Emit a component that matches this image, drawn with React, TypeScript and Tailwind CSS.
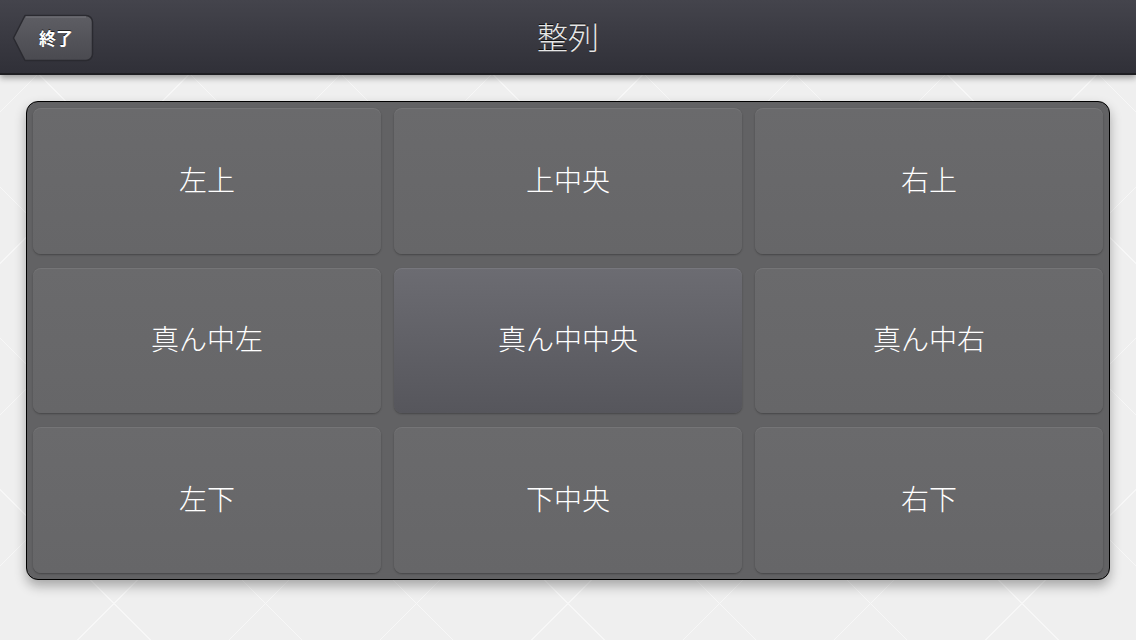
const cells = [
  '左上', '上中央', '右上',
  '真ん中左', '真ん中中央', '真ん中右',
  '左下', '下中央', '右下',
];

function BackButton() {
  return (
    <button className="relative ml-[12px] mt-[14px] h-[48px] w-[82px]">
      <svg className="absolute inset-0" width="82" height="48" viewBox="0 0 82 48">
        <defs>
          <linearGradient id="bb" x1="0" y1="0" x2="0" y2="1">
            <stop offset="0" stopColor="#5e5e64" />
            <stop offset="1" stopColor="#4a4a50" />
          </linearGradient>
        </defs>
        <path
          d="M13 1.5 H74 a6.5 6.5 0 0 1 6.5 6.5 V40 a6.5 6.5 0 0 1 -6.5 6.5 H13 L1.5 24 Z"
          fill="url(#bb)"
          stroke="#2a2a30"
          strokeWidth="1.5"
          strokeLinejoin="round"
        />
        <path d="M14 3 H74" stroke="#77777d" strokeWidth="1" />
      </svg>
      <span className="relative flex h-full items-center justify-center pl-[6px] text-[17px] font-bold text-white [text-shadow:0_-1px_0_#222]">
        終了
      </span>
    </button>
  );
}

export default function App() {
  return (
    <div className="flex h-[640px] w-[1136px] flex-col overflow-hidden bg-[#efefef] bg-[repeating-linear-gradient(45deg,transparent_0,transparent_106px,#f7f7f7_106px,#f7f7f7_107px),repeating-linear-gradient(-45deg,transparent_0,transparent_106px,#f7f7f7_106px,#f7f7f7_107px)] font-['Noto_Sans_CJK_JP','Noto_Sans',sans-serif]">
      <header className="relative z-10 flex h-[75px] shrink-0 items-start border-b-2 border-[#1e1e22] bg-gradient-to-b from-[#44444c] to-[#303038] shadow-[0_3px_6px_rgba(0,0,0,0.35)]">
        <BackButton />
        <h1 className="absolute left-0 right-0 top-[16px] text-center text-[31px] font-light leading-[40px] text-[#e6e6e6] [text-shadow:0_-1px_0_#111]">
          整列
        </h1>
      </header>

      <main className="px-[26px] pt-[26px]">
        <div className="grid h-[479px] grid-cols-3 grid-rows-3 gap-x-[13px] gap-y-[14px] rounded-[12px] border border-black bg-[#626264] p-[6px] shadow-[0_6px_12px_rgba(0,0,0,0.3)]">
          {cells.map((label, i) => (
            <div
              key={label}
              className={`flex items-center justify-center rounded-[8px] pb-[4px] text-[28px] font-light text-white shadow-[0_1px_2px_rgba(0,0,0,0.3),inset_0_1px_0_rgba(255,255,255,0.08)] ${
                i === 4
                  ? 'bg-gradient-to-b from-[#6c6c72] to-[#56565c]'
                  : 'bg-gradient-to-b from-[#6a6a6c] to-[#666668]'
              }`}
            >
              {label}
            </div>
          ))}
        </div>
      </main>
    </div>
  );
}
